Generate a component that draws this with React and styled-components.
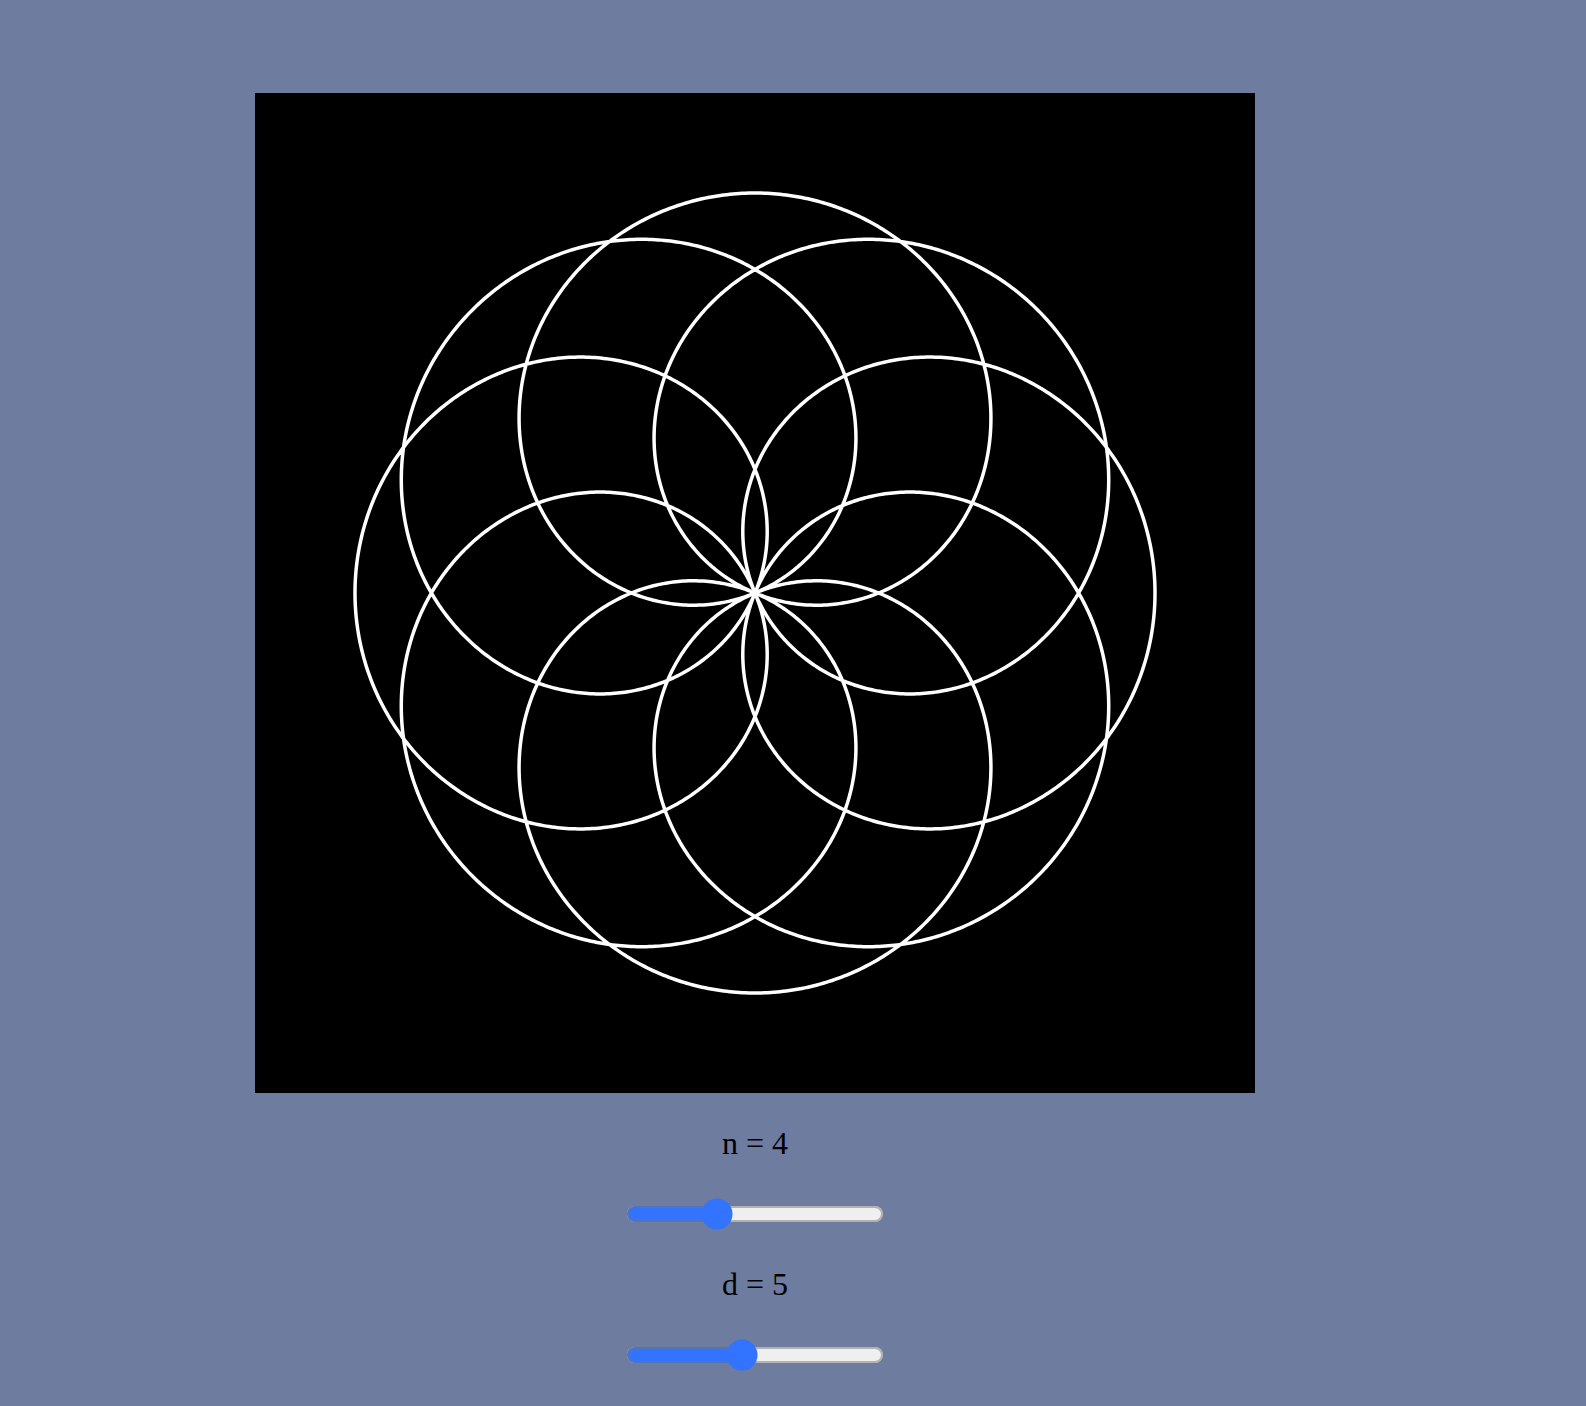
import React, { useMemo, useState } from 'react';
import styled, { createGlobalStyle } from 'styled-components';

const GlobalStyle = createGlobalStyle`
	html, body {
		margin: 0;
		padding: 0;
		background: #6e7ca0;
	}
`;

const Page = styled.div`
	min-height: 100vh;
	background: #6e7ca0;
	padding: 93px 0 0 255px;
	box-sizing: border-box;
	font-family: "Liberation Serif", "Times New Roman", serif;
`;

const Column = styled.div`
	width: 1000px;
	display: flex;
	flex-direction: column;
	align-items: center;
`;

const Canvas = styled.svg`
	display: block;
	width: 1000px;
	height: 1000px;
	background: #000000;
`;

const Label = styled.p`
	margin: ${p => (p.$first ? '32px' : '36px')} 0 37px;
	font-size: 32px;
	line-height: 36px;
	color: #000000;
`;

const Slider = styled.input`
	zoom: 2;
	margin: 0;
	width: 129px;
	height: 16px;
	display: block;
	accent-color: #3273ff;
`;

const rosePath = (n, d, radius) => {
	const k = n / d;
	const turns = (n * d) % 2 === 0 ? 2 * d : d;
	const end = Math.PI * turns;
	const steps = 4000;
	const points = [];
	for (let i = 0; i <= steps; i++) {
		const a = (end * i) / steps;
		const r = radius * Math.cos(k * a);
		const x = 500 + r * Math.cos(a);
		const y = 500 + r * Math.sin(a);
		points.push(`${x.toFixed(2)},${y.toFixed(2)}`);
	}
	return `M${points.join('L')}`;
};

const Rose = ({ n, d }) => {
	const path = useMemo(() => rosePath(n, d, 400), [n, d]);
	return (
		<Canvas viewBox="0 0 1000 1000">
			<path d={path} fill="none" stroke="#ffffff" strokeWidth="3.5" />
		</Canvas>
	);
};

const Control = ({ name, value, onChange, first }) => (
	<>
		<Label $first={first}>{`${name} = ${value}`}</Label>
		<Slider
			type="range"
			min="1"
			max="10"
			value={value}
			onChange={e => onChange(Number(e.target.value))}
		/>
	</>
);

export default function App() {
	const [n, setN] = useState(4);
	const [d, setD] = useState(5);

	return (
		<Page>
			<GlobalStyle />
			<Column>
				<Rose n={n} d={d} />
				<Control name="n" value={n} onChange={setN} first />
				<Control name="d" value={d} onChange={setD} />
			</Column>
		</Page>
	);
}
